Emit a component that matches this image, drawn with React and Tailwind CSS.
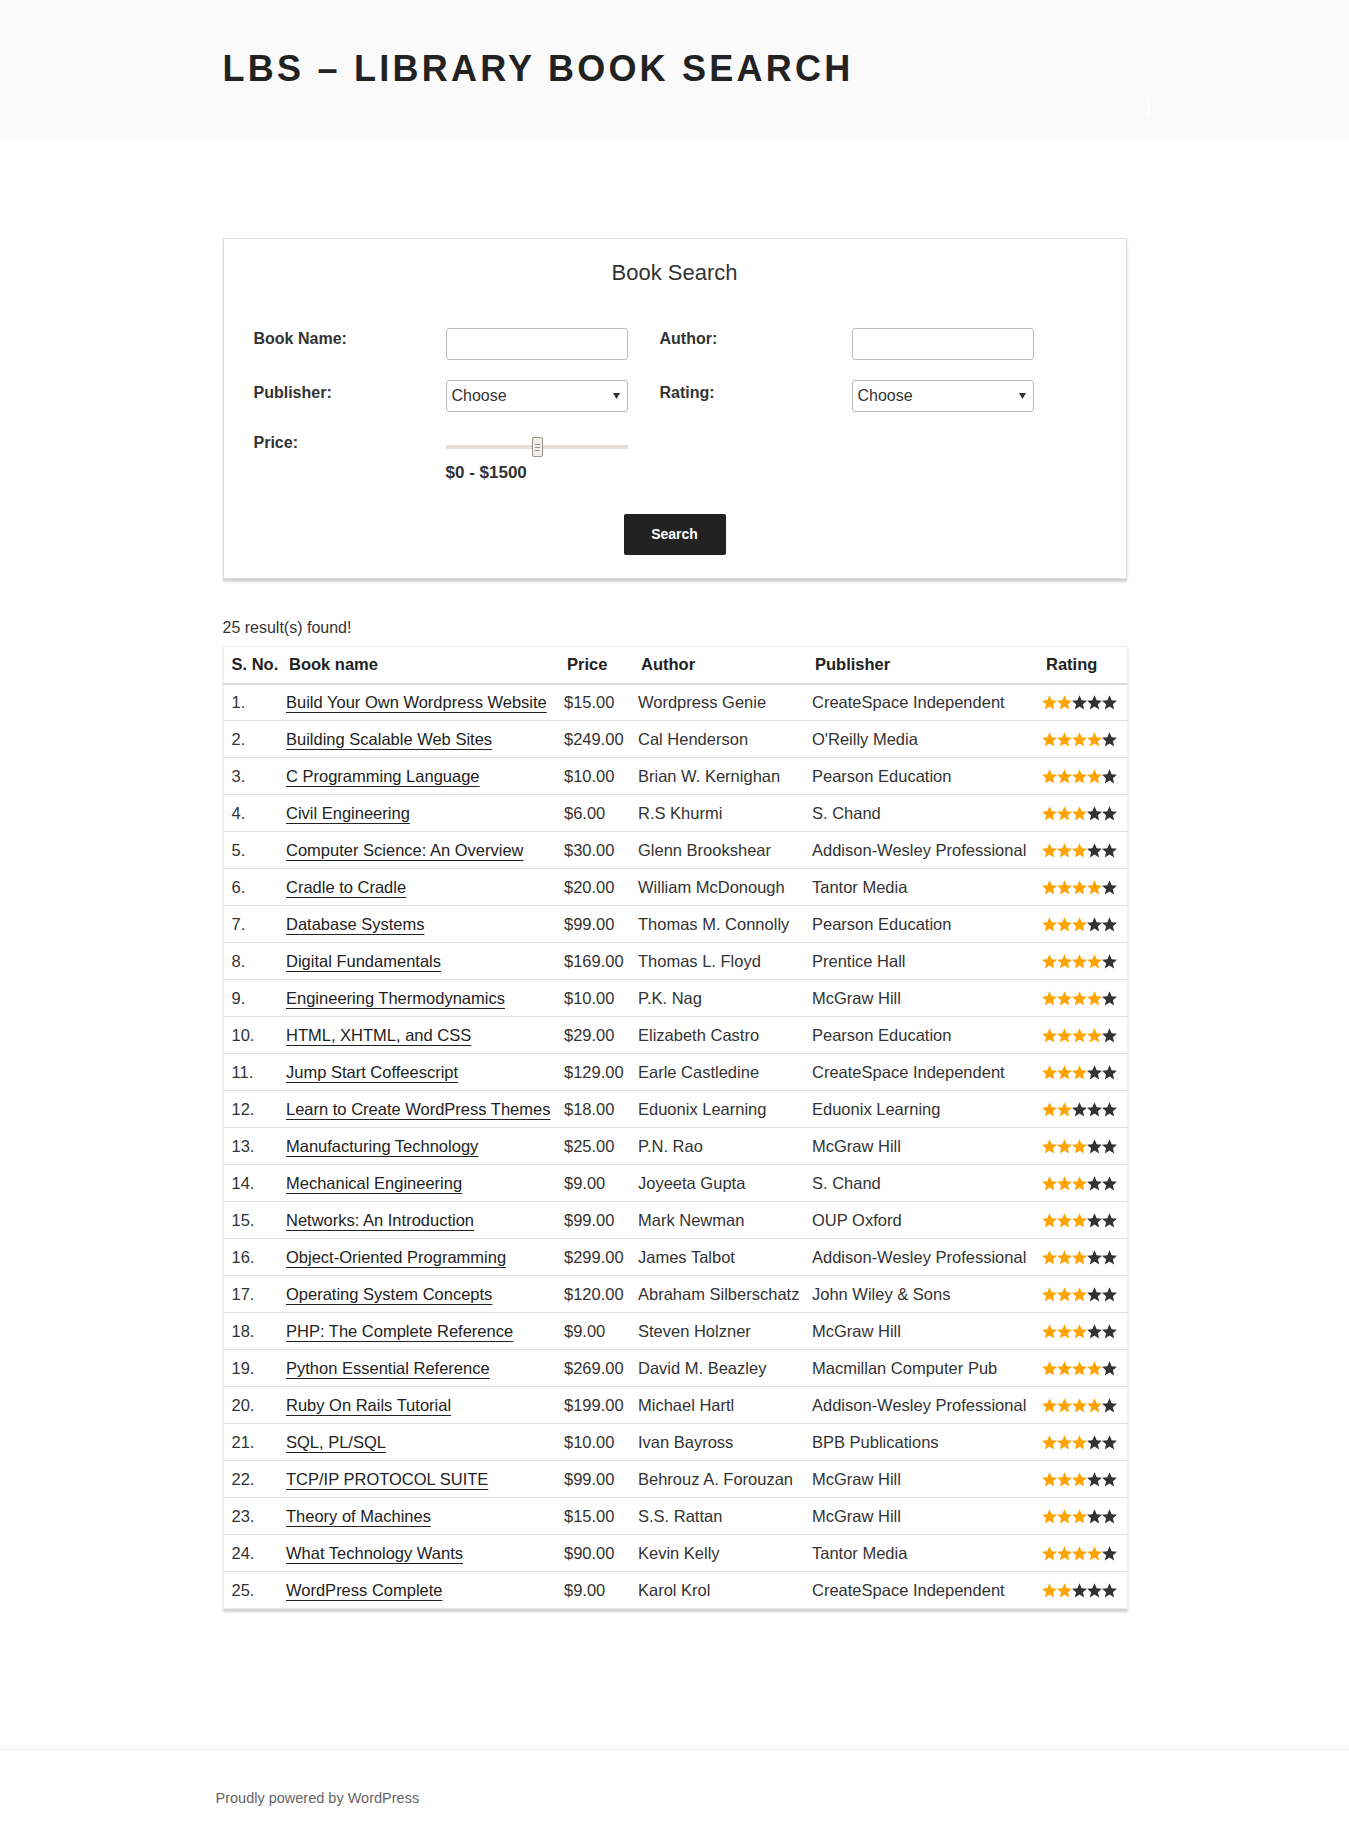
import React from "react";

const books = [
    ["Build Your Own Wordpress Website", "$15.00", "Wordpress Genie", "CreateSpace Independent", 2],
    ["Building Scalable Web Sites", "$249.00", "Cal Henderson", "O'Reilly Media", 4],
    ["C Programming Language", "$10.00", "Brian W. Kernighan", "Pearson Education", 4],
    ["Civil Engineering", "$6.00", "R.S Khurmi", "S. Chand", 3],
    ["Computer Science: An Overview", "$30.00", "Glenn Brookshear", "Addison-Wesley Professional", 3],
    ["Cradle to Cradle", "$20.00", "William McDonough", "Tantor Media", 4],
    ["Database Systems", "$99.00", "Thomas M. Connolly", "Pearson Education", 3],
    ["Digital Fundamentals", "$169.00", "Thomas L. Floyd", "Prentice Hall", 4],
    ["Engineering Thermodynamics", "$10.00", "P.K. Nag", "McGraw Hill", 4],
    ["HTML, XHTML, and CSS", "$29.00", "Elizabeth Castro", "Pearson Education", 4],
    ["Jump Start Coffeescript", "$129.00", "Earle Castledine", "CreateSpace Independent", 3],
    ["Learn to Create WordPress Themes", "$18.00", "Eduonix Learning", "Eduonix Learning", 2],
    ["Manufacturing Technology", "$25.00", "P.N. Rao", "McGraw Hill", 3],
    ["Mechanical Engineering", "$9.00", "Joyeeta Gupta", "S. Chand", 3],
    ["Networks: An Introduction", "$99.00", "Mark Newman", "OUP Oxford", 3],
    ["Object-Oriented Programming", "$299.00", "James Talbot", "Addison-Wesley Professional", 3],
    ["Operating System Concepts", "$120.00", "Abraham Silberschatz", "John Wiley & Sons", 3],
    ["PHP: The Complete Reference", "$9.00", "Steven Holzner", "McGraw Hill", 3],
    ["Python Essential Reference", "$269.00", "David M. Beazley", "Macmillan Computer Pub", 4],
    ["Ruby On Rails Tutorial", "$199.00", "Michael Hartl", "Addison-Wesley Professional", 4],
    ["SQL, PL/SQL", "$10.00", "Ivan Bayross", "BPB Publications", 3],
    ["TCP/IP PROTOCOL SUITE", "$99.00", "Behrouz A. Forouzan", "McGraw Hill", 3],
    ["Theory of Machines", "$15.00", "S.S. Rattan", "McGraw Hill", 3],
    ["What Technology Wants", "$90.00", "Kevin Kelly", "Tantor Media", 4],
    ["WordPress Complete", "$9.00", "Karol Krol", "CreateSpace Independent", 2],
];

const Star = ({ on }) => (
    <svg width="15" height="15" viewBox="1.2 1.5 21.6 21" className="block">
        <path
            d="M12 1.5l3.1 7.2 7.7.6-5.9 5.1 1.8 7.6L12 17.9 5.3 22l1.8-7.6L1.2 9.3l7.7-.6z"
            fill={on ? "#ffa300" : "#333333"}
        />
    </svg>
);

const Stars = ({ n }) => (
    <div className="flex">
        {[1, 2, 3, 4, 5].map((i) => (
            <Star key={i} on={i <= n} />
        ))}
    </div>
);

const Field = () => (
    <div className="w-[182px] h-[32px] bg-white border border-[#bbb] rounded-[3px]"></div>
);

const Select = () => (
    <div className="w-[182px] h-[32px] bg-white border border-[#bbb] rounded-[3px] flex items-center justify-between pl-[5px] pr-[7px]">
        <span className="text-[16px] text-[#333]">Choose</span>
        <svg width="7" height="6" viewBox="0 0 7 6">
            <path d="M0 0h7L3.5 6z" fill="#333" />
        </svg>
    </div>
);

const App = () => {
    return (
        <div className="min-h-screen bg-white text-[#333] font-['Liberation_Sans',Arial,sans-serif]">
            {/* Header */}
            <div className="relative h-[141px] bg-[#fafafa]">
                <div className="w-[904px] mx-auto pt-[46px]">
                    <h1 className="text-[36px] leading-[45px] font-bold tracking-[0.09em] text-[#222] uppercase">
                        LBS – Library Book Search
                    </h1>
                </div>
                <svg className="absolute left-[1142px] top-[98px]" width="14" height="20" viewBox="0 0 14 20">
                    <path d="M7 1v17M1 12l6 6 6-6" stroke="#fff" strokeWidth="1.6" fill="none" />
                </svg>
            </div>

            {/* Search box */}
            <div className="w-[904px] mx-auto mt-[97px] border border-[#ddd] shadow-[0_3px_2px_rgba(0,0,0,0.18)] pt-[19px] pb-[23px]">
                <h2 className="text-center text-[22px] leading-[30px] font-light text-[#333]">
                    Book Search
                </h2>

                <div className="mt-[40px] pl-[30px] grid grid-cols-[192px_214px_192px_183px] gap-y-[20px] items-start">
                    <label className="font-bold text-[16px] leading-[22px]">Book Name:</label>
                    <Field />
                    <label className="font-bold text-[16px] leading-[22px]">Author:</label>
                    <Field />

                    <label className="font-bold text-[16px] leading-[26px]">Publisher:</label>
                    <Select />
                    <label className="font-bold text-[16px] leading-[26px]">Rating:</label>
                    <Select />

                    <label className="font-bold text-[16px] leading-[22px]">Price:</label>
                    <div>
                        <div className="relative w-[182px] h-[26px]">
                            <div className="absolute left-0 right-0 top-[13px] h-[4px] bg-[#e2ddd7]"></div>
                            <div className="absolute left-[86px] top-[5px] w-[11px] h-[20px] bg-[#f0eeeb] border border-[#9a948d] rounded-[2px] flex flex-col items-center justify-center gap-[2px]">
                                <div className="w-[5px] h-px bg-[#9a948d]"></div>
                                <div className="w-[5px] h-px bg-[#9a948d]"></div>
                                <div className="w-[5px] h-px bg-[#9a948d]"></div>
                            </div>
                        </div>
                        <p className="mt-[4px] text-[17px] leading-[22px] font-bold text-[#333]">$0 - $1500</p>
                    </div>
                </div>

                <div className="flex justify-center mt-[30px]">
                    <button className="w-[102px] h-[41px] bg-[#222] text-white text-[14px] font-bold rounded-[2px]">
                        Search
                    </button>
                </div>
            </div>

            {/* Results */}
            <div className="w-[904px] mx-auto mt-[37px]">
                <p className="text-[16px] leading-[24px]">25 result(s) found!</p>

                <table className="mt-[6px] w-full table-fixed border border-[#eee] shadow-[0_3px_2px_rgba(0,0,0,0.18)] text-[16.5px]">
                    <colgroup>
                        <col className="w-[56px]" />
                        <col className="w-[278px]" />
                        <col className="w-[74px]" />
                        <col className="w-[174px]" />
                        <col className="w-[230px]" />
                        <col className="w-[92px]" />
                    </colgroup>
                    <thead>
                        <tr className="border-b-2 border-[#ddd] h-[37px] text-left text-[#222]">
                            <th className="pl-[8px] font-bold">S. No.</th>
                            <th className="pl-[10px] font-bold">Book name</th>
                            <th className="pl-[10px] font-bold">Price</th>
                            <th className="pl-[10px] font-bold">Author</th>
                            <th className="pl-[10px] font-bold">Publisher</th>
                            <th className="pl-[11px] font-bold">Rating</th>
                        </tr>
                    </thead>
                    <tbody>
                        {books.map((b, i) => (
                            <tr key={i} className="h-[37px] border-b border-[#ddd] last:border-b-0">
                                <td className="pl-[8px]">{i + 1}.</td>
                                <td className="pl-[7px] whitespace-nowrap">
                                    <a href="#" className="text-[#222] underline decoration-[#222] underline-offset-[4px]">
                                        {b[0]}
                                    </a>
                                </td>
                                <td className="pl-[7px]">{b[1]}</td>
                                <td className="pl-[7px] whitespace-nowrap">{b[2]}</td>
                                <td className="pl-[7px] whitespace-nowrap">{b[3]}</td>
                                <td className="pl-[7px]">
                                    <Stars n={b[4]} />
                                </td>
                            </tr>
                        ))}
                    </tbody>
                </table>
            </div>

            {/* Footer */}
            <div className="mt-[140px] border-t border-[#eee]">
                <div className="w-[918px] mx-auto pt-[38px] pb-[36px]">
                    <p className="text-[14.5px] leading-[20px] text-[#666]">Proudly powered by WordPress</p>
                </div>
            </div>
        </div>
    );
};

export default App;
